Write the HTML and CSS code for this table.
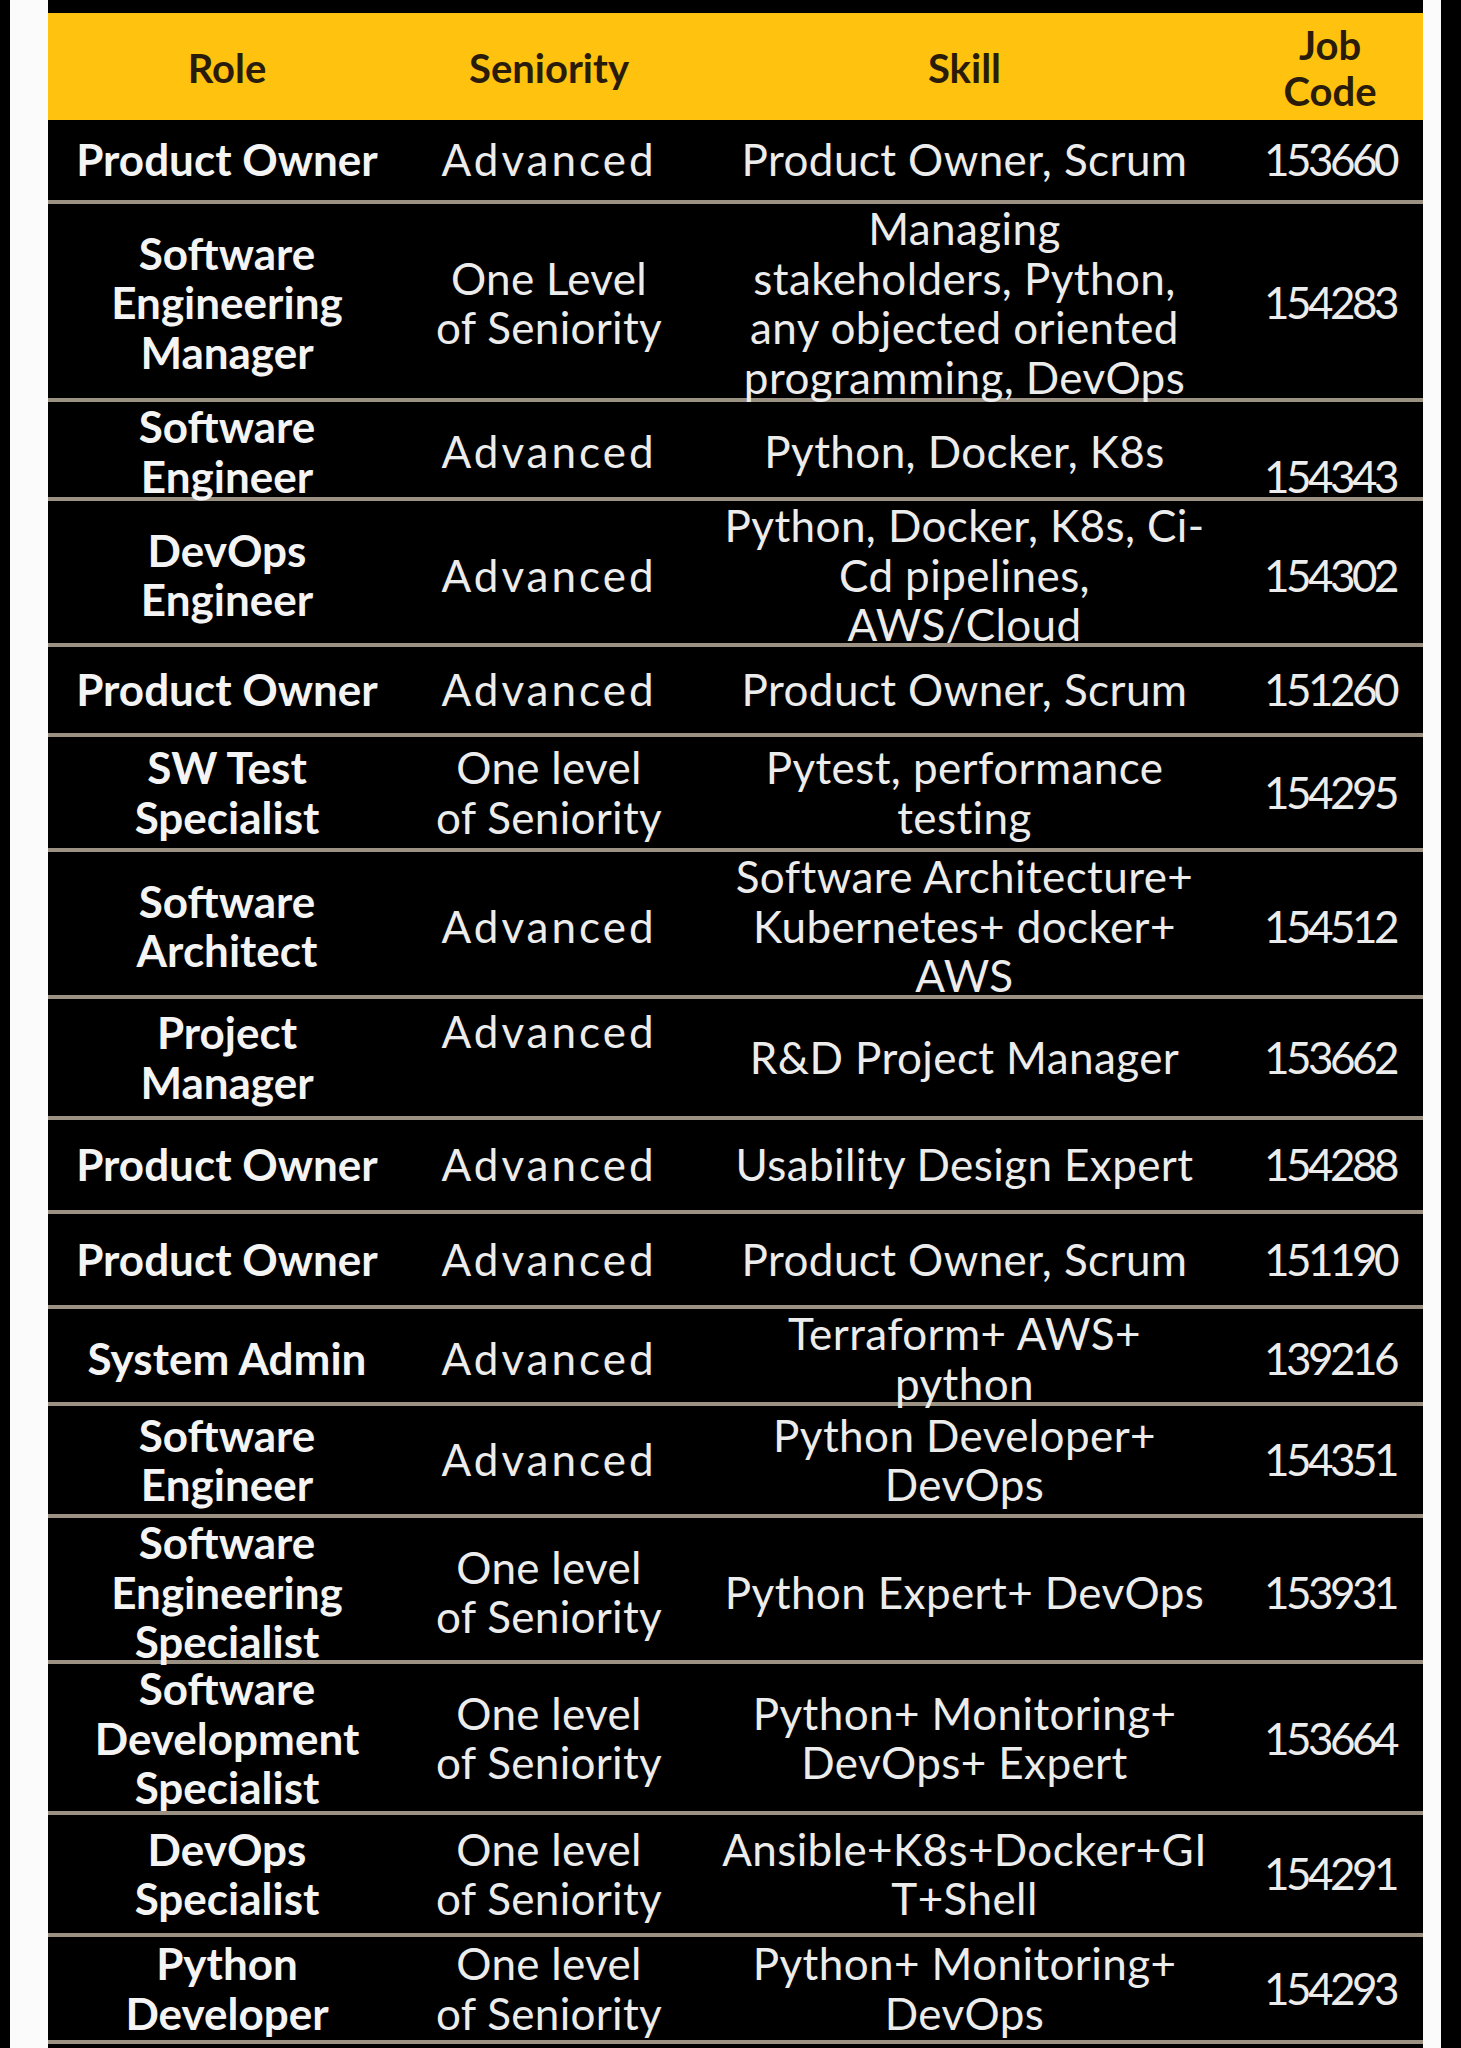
FILE: index.html
```html
<!DOCTYPE html>
<html lang="en">
<head>
<meta charset="utf-8">
<title>Job openings</title>
<link rel="stylesheet" href="styles.css">
</head>
<body>
<div class="frame">
  <div class="sheet">
    <div class="row head">
      <div class="cell">Role</div>
      <div class="cell">Seniority</div>
      <div class="cell">Skill</div>
      <div class="cell">Job<br>Code</div>
    </div>

    <div class="row r1">
      <div class="cell role">Product Owner</div>
      <div class="cell level adv">Advanced</div>
      <div class="cell skill">Product Owner, Scrum</div>
      <div class="cell code">153660</div>
    </div>

    <div class="row r2">
      <div class="cell role">Software<br>Engineering<br>Manager</div>
      <div class="cell level">One Level<br>of Seniority</div>
      <div class="cell skill">Managing<br>stakeholders, Python,<br>any objected oriented<br>programming, DevOps</div>
      <div class="cell code">154283</div>
    </div>

    <div class="row r3">
      <div class="cell role">Software<br>Engineer</div>
      <div class="cell level adv">Advanced</div>
      <div class="cell skill">Python, Docker, K8s</div>
      <div class="cell code bottom">154343</div>
    </div>

    <div class="row r4">
      <div class="cell role">DevOps<br>Engineer</div>
      <div class="cell level adv">Advanced</div>
      <div class="cell skill">Python, Docker, K8s, Ci-<br>Cd pipelines,<br>AWS/Cloud</div>
      <div class="cell code">154302</div>
    </div>

    <div class="row r5">
      <div class="cell role">Product Owner</div>
      <div class="cell level adv">Advanced</div>
      <div class="cell skill">Product Owner, Scrum</div>
      <div class="cell code">151260</div>
    </div>

    <div class="row r6">
      <div class="cell role">SW Test<br>Specialist</div>
      <div class="cell level">One level<br>of Seniority</div>
      <div class="cell skill">Pytest, performance<br>testing</div>
      <div class="cell code">154295</div>
    </div>

    <div class="row r7">
      <div class="cell role">Software<br>Architect</div>
      <div class="cell level adv">Advanced</div>
      <div class="cell skill">Software Architecture+<br>Kubernetes+ docker+<br>AWS</div>
      <div class="cell code">154512</div>
    </div>

    <div class="row r8">
      <div class="cell role">Project<br>Manager</div>
      <div class="cell level adv top">Advanced</div>
      <div class="cell skill">R&amp;D Project Manager</div>
      <div class="cell code">153662</div>
    </div>

    <div class="row r9">
      <div class="cell role">Product Owner</div>
      <div class="cell level adv">Advanced</div>
      <div class="cell skill">Usability Design Expert</div>
      <div class="cell code">154288</div>
    </div>

    <div class="row r10">
      <div class="cell role">Product Owner</div>
      <div class="cell level adv">Advanced</div>
      <div class="cell skill">Product Owner, Scrum</div>
      <div class="cell code">151190</div>
    </div>

    <div class="row r11">
      <div class="cell role">System Admin</div>
      <div class="cell level adv">Advanced</div>
      <div class="cell skill">Terraform+ AWS+<br>python</div>
      <div class="cell code">139216</div>
    </div>

    <div class="row r12">
      <div class="cell role">Software<br>Engineer</div>
      <div class="cell level adv">Advanced</div>
      <div class="cell skill">Python Developer+<br>DevOps</div>
      <div class="cell code">154351</div>
    </div>

    <div class="row r13">
      <div class="cell role">Software<br>Engineering<br>Specialist</div>
      <div class="cell level">One level<br>of Seniority</div>
      <div class="cell skill">Python Expert+ DevOps</div>
      <div class="cell code">153931</div>
    </div>

    <div class="row r14">
      <div class="cell role">Software<br>Development<br>Specialist</div>
      <div class="cell level">One level<br>of Seniority</div>
      <div class="cell skill">Python+ Monitoring+<br>DevOps+ Expert</div>
      <div class="cell code">153664</div>
    </div>

    <div class="row r15">
      <div class="cell role">DevOps<br>Specialist</div>
      <div class="cell level">One level<br>of Seniority</div>
      <div class="cell skill">Ansible+K8s+Docker+GI<br>T+Shell</div>
      <div class="cell code">154291</div>
    </div>

    <div class="row r16">
      <div class="cell role">Python<br>Developer</div>
      <div class="cell level">One level<br>of Seniority</div>
      <div class="cell skill">Python+ Monitoring+<br>DevOps</div>
      <div class="cell code">154293</div>
    </div>
  </div>
</div>
</body>
</html>
```

FILE: styles.css
```css
html, body {
  margin: 0;
  padding: 0;
  background: #000;
}

body {
  width: 1461px;
  height: 2048px;
  overflow: hidden;
  font-family: "Lato", "DejaVu Sans", sans-serif;
}

.frame {
  margin-left: 10px;
  width: 1431px;
  height: 2048px;
  box-sizing: border-box;
  background: #fbfbfb;
  padding: 0 18px 0 38px;
}

.sheet {
  width: 1375px;
  height: 2048px;
  background: #000;
  padding-top: 13px;
  box-sizing: border-box;
}

.row {
  display: grid;
  grid-template-columns: 358px 286px 545px 186px;
  box-sizing: border-box;
  border-bottom: 4px solid #9b9284;
  color: #ececec;
  font-size: 44px;
  line-height: 49.5px;
  font-weight: 400;
}

.cell {
  display: flex;
  align-items: center;
  justify-content: center;
  text-align: center;
  white-space: nowrap;
  min-width: 0;
}

.cell.role {
  font-weight: 700;
  color: #f4f4f4;
}

.cell.level {
  letter-spacing: 0.3px;
}

.cell.level.adv {
  letter-spacing: 3px;
}

.cell.skill {
  letter-spacing: 0.4px;
}

.cell.code {
  letter-spacing: -3.5px;
}

.cell.bottom {
  align-items: flex-end;
}

.cell.top {
  align-items: flex-start;
  padding-top: 8px;
}

.head {
  height: 107px;
  background: #fec20f;
  color: #2a1c0a;
  font-weight: 700;
  font-size: 40px;
  line-height: 46px;
  border-bottom: none;
}

.head .cell {
  padding-top: 2px;
}

.r1  { height: 84px; }
.r2  { height: 198px; }
.r3  { height: 99px; }
.r4  { height: 146px; }
.r5  { height: 90px; }
.r6  { height: 115px; }
.r7  { height: 147px; }
.r8  { height: 121px; }
.r9  { height: 94px; }
.r10 { height: 95px; }
.r11 { height: 97px; }
.r12 { height: 112px; }
.r13 { height: 146px; }
.r14 { height: 151px; }
.r15 { height: 122px; }
.r16 { height: 107px; }
```
